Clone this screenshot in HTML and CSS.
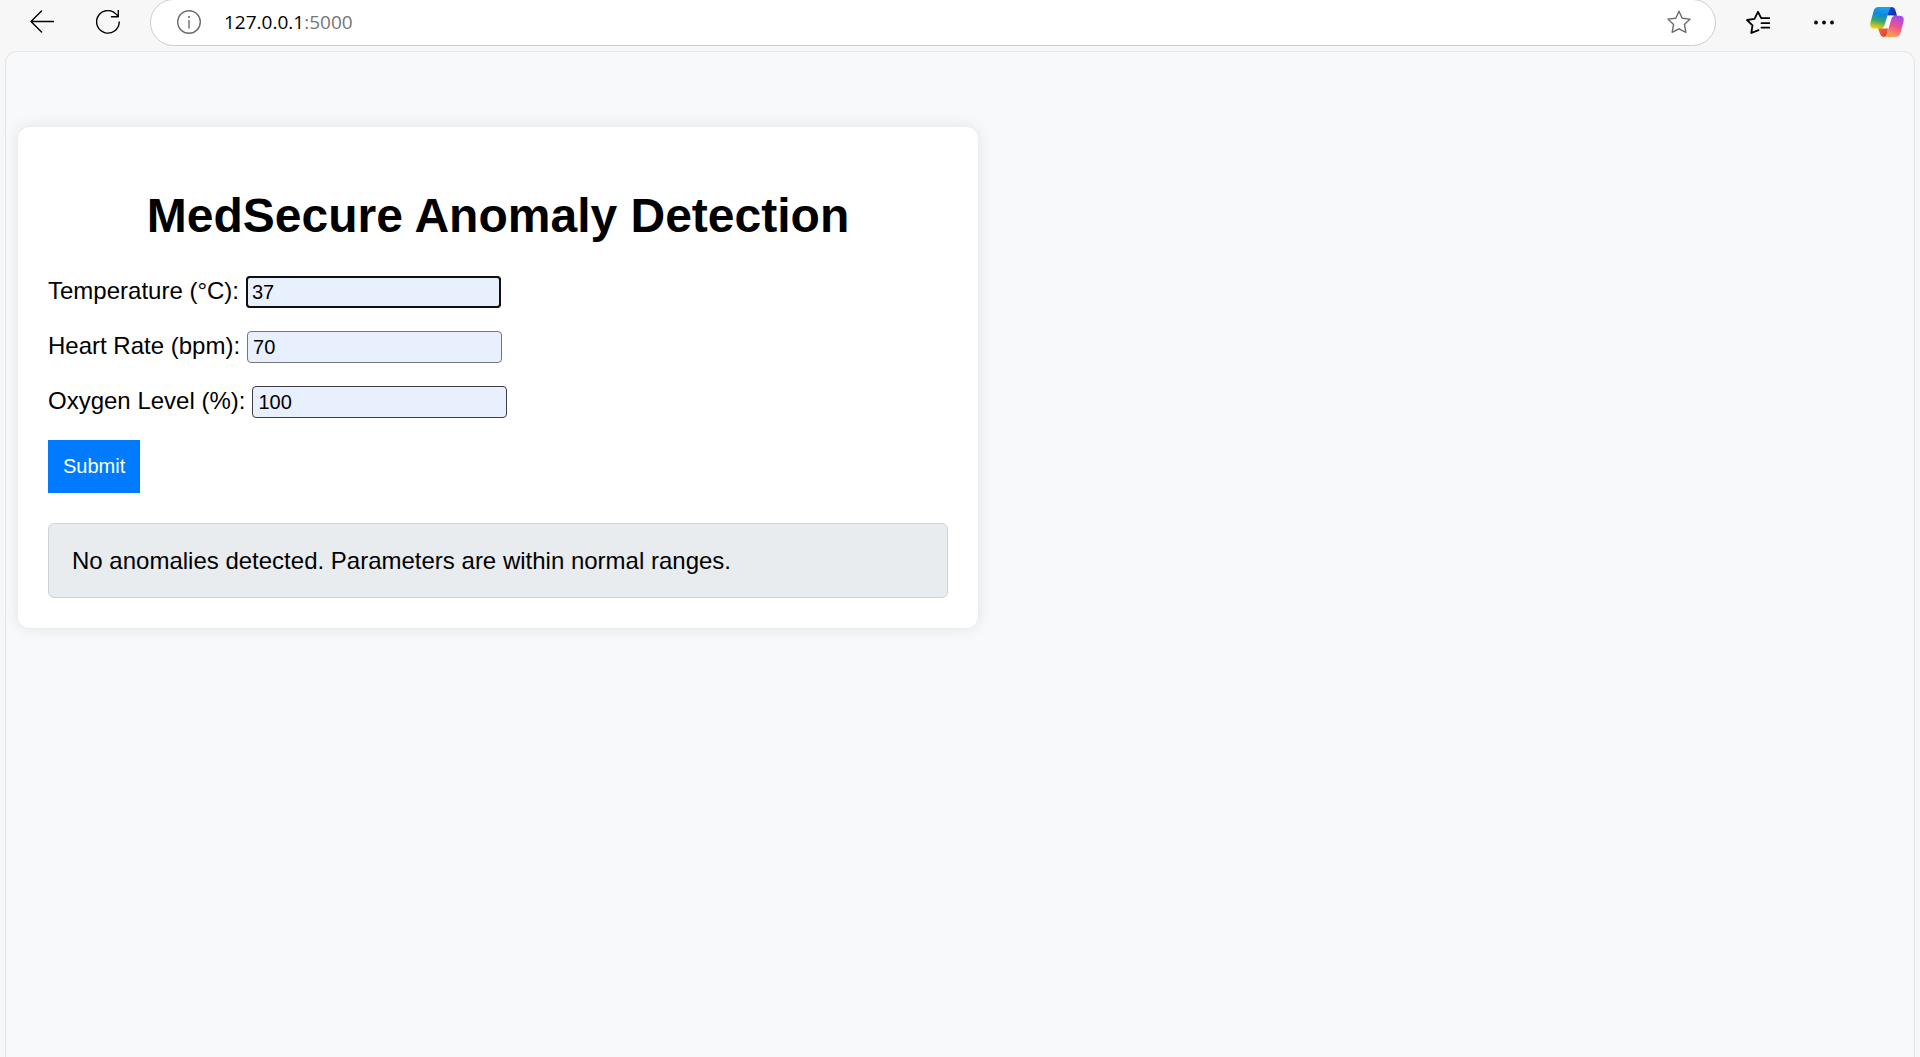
FILE: index.html
```html
<!DOCTYPE html>
<html lang="en">
<head>
<meta charset="utf-8">
<title>MedSecure Anomaly Detection</title>
<link rel="stylesheet" href="styles.css">
</head>
<body>
<header class="toolbar">
  <button class="icon-button" type="button" aria-label="Back">
    <svg class="icon" viewBox="0 0 24 24"><path d="M23.500 11.500H1M11.500 1L1 11.500l10.500 10.500"/></svg>
  </button>
  <button class="icon-button" type="button" aria-label="Refresh">
    <svg class="icon" viewBox="0 0 24 24"><path d="M23.200 12A11.300 11.300 0 1 1 20.600 4.600L22.300 6.600M22.300 0v6.700h-6.800"/></svg>
  </button>
  <div class="address">
    <svg class="icon muted" viewBox="0 0 24 24"><circle cx="12" cy="12" r="11.300"/><path d="M12 10.500v7.500"/><circle class="solid" cx="12" cy="7" r="1.100"/></svg>
    <div class="url" role="textbox" aria-label="Address">127.0.0.1<span class="port">:5000</span></div>
    <button class="star-button" type="button" aria-label="Add to favorites">
      <svg class="icon muted" viewBox="0 0 24 24"><path d="M12 1.200l3.200 7 7.900.9-5.700 5.300 1.500 7.900L12 18.800l-6.900 3.500 1.500-7.900L.9 9.100l7.900-.9z"/></svg>
    </button>
  </div>
  <button class="icon-button" type="button" aria-label="Favorites">
    <svg class="icon bold" viewBox="0 0 24 24"><path d="M12.500 20.200L5.300 23l1.200-7.700L1 10l7.500-1.200L12 1.800l3.200 6.400h8.800M15.500 13.200H24M15.500 17.600H24"/></svg>
  </button>
  <button class="icon-button" type="button" aria-label="Settings and more">
    <svg class="icon dots" viewBox="0 0 24 24"><circle cx="4" cy="12.500" r="1.900"/><circle cx="12" cy="12.500" r="1.900"/><circle cx="20" cy="12.500" r="1.900"/></svg>
  </button>
  <button class="copilot-button" type="button" aria-label="Copilot">
    <svg class="copilot" viewBox="0 0 34 30">
      <defs>
        <linearGradient id="cool" x1="0.600" y1="0" x2="0.400" y2="1"><stop offset="0" stop-color="#15a5ef"/><stop offset=".35" stop-color="#1287df"/><stop offset=".65" stop-color="#35a76b"/><stop offset="1" stop-color="#f3cf0c"/></linearGradient>
        <linearGradient id="navy" x1="0" y1="0" x2="1" y2="1"><stop offset="0" stop-color="#1550e0"/><stop offset="1" stop-color="#102a9e"/></linearGradient>
        <linearGradient id="warm" x1="0.700" y1="0" x2="0.400" y2="1"><stop offset="0" stop-color="#a348ee"/><stop offset=".5" stop-color="#ee5290"/><stop offset="1" stop-color="#ffa447"/></linearGradient>
        <linearGradient id="ember" x1="0" y1="0" x2="1" y2="1"><stop offset="0" stop-color="#f56b3c"/><stop offset="1" stop-color="#d93b32"/></linearGradient>
      </defs>
      <path fill="url(#navy)" d="M19 0h3q2.500 0 3.200 2.500L27 8.700H16z"/>
      <path fill="url(#ember)" d="M8 21h10l-1 9h-3.500q-2.500 0-3.300-2.700z"/>
      <path fill="#fff" d="M16.500 8.500h7l-4 13h-7.500z"/>
      <path fill="url(#cool)" d="M8.500 0H22q-2 .3-3 3.500L14.500 18.500q-1 3-4 3H4.500Q-.8 21.500.5 15.500L3.600 4Q4.700 0 8.500 0z"/>
      <path fill="url(#warm)" d="M25.500 30H13.500q2.500-.3 3.500-3.500l4.500-15q1-2.800 4-2.800h4q5 0 4.100 5.500L30.500 26Q29.300 30 25.500 30z"/>
    </svg>
  </button>
</header>
<main class="page">
  <section class="card">
    <h1>MedSecure Anomaly Detection</h1>
    <form>
      <div class="field">
        <label for="temperature">Temperature (°C):</label>
        <input class="active" id="temperature" type="text" value="37">
      </div>
      <div class="field">
        <label for="heart-rate">Heart Rate (bpm):</label>
        <input id="heart-rate" type="text" value="70">
      </div>
      <div class="field">
        <label for="oxygen">Oxygen Level (%):</label>
        <input class="dark" id="oxygen" type="text" value="100">
      </div>
      <button class="submit" type="submit">Submit</button>
    </form>
    <div class="result">No anomalies detected. Parameters are within normal ranges.</div>
  </section>
</main>
</body>
</html>
```
FILE: styles.css
```css
* {
  box-sizing: border-box;
}

body {
  margin: 0;
  min-height: 100vh;
  display: flex;
  flex-direction: column;
  background: #f7f7f7;
  color: #000;
  font-family: "Liberation Sans", Arial, sans-serif;
  font-size: 24px;
}

button {
  border: 0;
  padding: 0;
  background: none;
  color: inherit;
  font-family: inherit;
}

/* Browser toolbar */
.toolbar {
  display: flex;
  align-items: center;
  gap: 42px;
  height: 51px;
  padding: 0 16px 7px 30px;
}

.icon-button,
.star-button,
.copilot-button {
  display: flex;
}

.copilot-button {
  margin-left: -8px;
}

.icon {
  width: 24px;
  height: 24px;
  flex: none;
  fill: none;
  stroke: #000;
  stroke-width: 1.4;
  stroke-linecap: round;
  stroke-linejoin: round;
}

.muted {
  stroke: #6b6b6b;
}

.bold {
  stroke-width: 1.8;
}

.solid {
  fill: #6b6b6b;
  stroke: none;
}

.dots {
  fill: #000;
  stroke: none;
}

.copilot {
  width: 34px;
  height: 30px;
}

.address {
  flex: 1;
  display: flex;
  align-items: center;
  height: 47px;
  margin: 0 -12px;
  padding: 0 24px 0 26px;
  border: 1px solid #cdcdcd;
  border-radius: 24px;
  background: #fff;
}

.url {
  flex: 1;
  margin-left: 23px;
  font-family: "Open Sans", "Segoe UI", sans-serif;
  font-size: 19px;
  line-height: 26px;
}

.port {
  color: #767676;
}

/* Web page viewport */
.page {
  flex: 1;
  margin: 0 5px;
  padding: 75px 12px;
  border: 1px solid #e5e5e6;
  border-bottom: 0;
  border-radius: 12px 12px 0 0;
  background: #f8f9fb;
}

.card {
  max-width: 960px;
  padding: 30px;
  border-radius: 12px;
  background: #fff;
  box-shadow: 0 0 15px rgba(0, 0, 0, 0.1);
}

h1 {
  margin: 32px 0 33px;
  font-size: 48px;
  line-height: 54px;
  text-align: center;
}

.field {
  display: flex;
  align-items: baseline;
  gap: 7px;
  height: 32px;
  margin-bottom: 23px;
}

.field:last-of-type {
  margin-bottom: 22px;
}

.field input {
  width: 255px;
  height: 32px;
  padding: 0 5px;
  border: 1px solid #767676;
  border-radius: 4px;
  background: #e8f0fe;
  color: #000;
  font-family: inherit;
  font-size: 20px;
}

.field .active {
  border-color: #101010;
  outline: 2px solid #101010;
  outline-offset: -2px;
}

.field .dark {
  border-color: #3c3c44;
}

.submit {
  display: block;
  padding: 15px;
  background: #007bff;
  color: #fff;
  font-size: 20px;
  line-height: 23px;
}

.result {
  margin-top: 30px;
  padding: 23px;
  border: 1px solid #ced4da;
  border-radius: 6px;
  background: #e8ecef;
  line-height: 27px;
}
```
